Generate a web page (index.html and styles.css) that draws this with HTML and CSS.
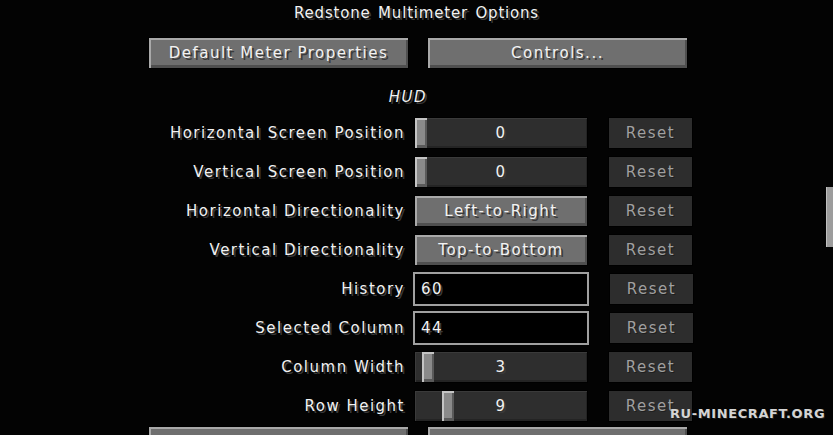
FILE: index.html
```html
<!DOCTYPE html>
<html lang="en">
<head>
    <meta charset="UTF-8">
    <meta name="viewport" content="width=device-width, initial-scale=1.0">
    <title>Redstone Multimeter Options</title>
    <link rel="stylesheet" href="styles.css">
</head>
<body>
    <div class="screen">
        <h1 class="title">Redstone Multimeter Options</h1>

        <div class="top-buttons">
            <button class="btn wide">Default Meter Properties</button>
            <button class="btn wide">Controls...</button>
        </div>

        <div class="list">
            <div class="category">HUD</div>

            <div class="row">
                <label class="label">Horizontal Screen Position</label>
                <div class="slider">
                    <span class="handle" style="left: 0px"></span>
                    <span class="value">0</span>
                </div>
                <button class="btn reset" disabled>Reset</button>
            </div>

            <div class="row">
                <label class="label">Vertical Screen Position</label>
                <div class="slider">
                    <span class="handle" style="left: 0px"></span>
                    <span class="value">0</span>
                </div>
                <button class="btn reset" disabled>Reset</button>
            </div>

            <div class="row">
                <label class="label">Horizontal Directionality</label>
                <button class="btn widget">Left-to-Right</button>
                <button class="btn reset" disabled>Reset</button>
            </div>

            <div class="row">
                <label class="label">Vertical Directionality</label>
                <button class="btn widget">Top-to-Bottom</button>
                <button class="btn reset" disabled>Reset</button>
            </div>

            <div class="row">
                <label class="label" for="history">History</label>
                <input class="field" id="history" type="text" value="60">
                <button class="btn reset" disabled>Reset</button>
            </div>

            <div class="row">
                <label class="label" for="column">Selected Column</label>
                <input class="field" id="column" type="text" value="44">
                <button class="btn reset" disabled>Reset</button>
            </div>

            <div class="row">
                <label class="label">Column Width</label>
                <div class="slider">
                    <span class="handle" style="left: 7px"></span>
                    <span class="value">3</span>
                </div>
                <button class="btn reset" disabled>Reset</button>
            </div>

            <div class="row">
                <label class="label">Row Height</label>
                <div class="slider">
                    <span class="handle" style="left: 27px"></span>
                    <span class="value">9</span>
                </div>
                <button class="btn reset" disabled>Reset</button>
            </div>
        </div>

        <div class="bottom-buttons">
            <button class="btn wide">Done</button>
            <button class="btn wide">Cancel</button>
        </div>

        <div class="scrollbar"></div>
        <div class="watermark">RU-MINECRAFT.ORG</div>
    </div>
</body>
</html>
```

FILE: styles.css
```css
html, body {
    margin: 0;
    padding: 0;
    background-color: #030303;
}
body {
    font-family: "DejaVu Sans", sans-serif;
    font-size: 15px;
    letter-spacing: 1.5px;
    color: #f2f2f2;
    text-shadow: 2px 2px 0 #3a3a3a;
}
.screen {
    position: relative;
    width: 833px;
    height: 435px;
    overflow: hidden;
}
.title {
    margin: 0;
    font-size: 15px;
    font-weight: normal;
    letter-spacing: 0.8px;
    word-spacing: 2px;
    line-height: 26px;
    text-align: center;
}
.top-buttons, .bottom-buttons {
    display: flex;
    gap: 18px;
    padding-left: 148px;
}
.top-buttons {
    margin-top: 11px;
}
.btn {
    font-family: inherit;
    font-size: inherit;
    letter-spacing: inherit;
    color: inherit;
    text-shadow: inherit;
    height: 32px;
    padding: 0;
    border: 1px solid #000;
    background-color: #6f6f6f;
    box-shadow: inset 2px 2px 0 #a9a9a9, inset -2px -3px 0 #4f4f4f;
    cursor: pointer;
}
.wide {
    width: 261px;
}
.list {
    height: 354px;
    padding-left: 148px;
    overflow: hidden;
}
.category {
    padding: 20px 0 12px;
    width: 520px;
    line-height: 16px;
    text-align: center;
    font-style: italic;
}
.row {
    display: flex;
    align-items: center;
    height: 32px;
    margin-bottom: 7px;
}
.label {
    width: 257px;
    margin-right: 9px;
    text-align: right;
}
.widget, .slider, .field {
    width: 174px;
    height: 32px;
    box-sizing: border-box;
}
.slider {
    position: relative;
    border: 1px solid #000;
    background-color: #2e2e2e;
    box-shadow: inset 1px 1px 0 #3a3a3a, inset -1px -2px 0 #242424;
    text-align: center;
    line-height: 30px;
}
.handle {
    position: absolute;
    top: 0;
    width: 12px;
    height: 30px;
    background-color: #8a8a8a;
    box-shadow: inset 2px 2px 0 #c4c4c4, inset -2px -3px 0 #5a5a5a;
}
.value {
    position: relative;
}
.field {
    margin-left: -1px;
    width: 176px;
    height: 34px;
    padding: 0 6px;
    border: 2px solid #a0a0a0;
    background-color: #000;
    font-family: inherit;
    font-size: inherit;
    letter-spacing: inherit;
    color: #f2f2f2;
    text-shadow: inherit;
    outline: none;
}
.reset {
    width: 85px;
    margin-left: 20px;
    background-color: #2d2d2d;
    box-shadow: none;
    color: #a0a0a0;
    text-shadow: 1px 1px 0 #1e1e1e;
    cursor: default;
}
.bottom-buttons {
    margin-top: 3px;
}
.scrollbar {
    position: absolute;
    right: 0;
    top: 187px;
    width: 6px;
    height: 60px;
    background-color: #9c9c9c;
    border-left: 1px solid #c0c0c0;
}
.watermark {
    position: absolute;
    left: 670px;
    top: 406px;
    font-size: 13px;
    font-weight: bold;
    letter-spacing: 0.6px;
    color: #d4d4d4;
    text-shadow: 1px 1px 0 #202020;
}
```
